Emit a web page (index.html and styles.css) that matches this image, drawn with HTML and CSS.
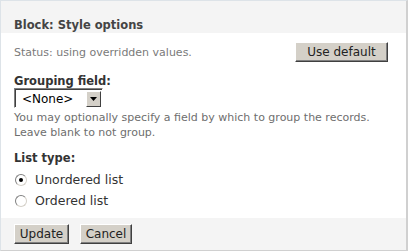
FILE: index.html
```html
<!DOCTYPE html>
<html>
<head>
<meta charset="utf-8">
<link rel="stylesheet" href="styles.css">
</head>
<body>
<div class="panel">
  <div class="header"><h2 class="title">Block: Style options</h2></div>
  <div class="content">
    <div class="status-row">
      <span class="status">Status: using overridden values.</span>
      <button class="btn btn-default">Use default</button>
    </div>
    <div class="field field-group">
      <label class="label">Grouping field:</label>
      <div class="select">
        <span class="select-value">&lt;None&gt;</span>
        <span class="select-arrow"><svg width="7" height="4" viewBox="0 0 7 4"><path d="M0 0H7L3.5 4Z" fill="#000"/></svg></span>
      </div>
      <div class="help">You may optionally specify a field by which to group the records.<br>Leave blank to not group.</div>
    </div>
    <div class="field field-list">
      <label class="label">List type:</label>
      <div class="radios">
        <label class="radio"><span class="radio-box checked"></span>Unordered list</label>
        <label class="radio"><span class="radio-box"></span>Ordered list</label>
      </div>
    </div>
  </div>
  <div class="footer">
    <button class="btn btn-update">Update</button>
    <button class="btn btn-cancel">Cancel</button>
  </div>
</div>
</body>
</html>
```
FILE: styles.css
```css
html, body {
  margin: 0;
  padding: 0;
  background: #fff;
}
body {
  font-family: "DejaVu Sans", Verdana, sans-serif;
  color: #333;
}
.panel {
  box-sizing: border-box;
  width: 408px;
  height: 251px;
  border-top: 1px solid #dde3e8;
  border-left: 1px solid #dde3e8;
  border-right: 2px solid #d0d0d0;
  border-bottom: 1px solid #d0d0d0;
  display: flex;
  flex-direction: column;
}
.header {
  background: #f4f4f4;
  height: 32px;
  padding-left: 13px;
  padding-bottom: 1px;
  display: flex;
  align-items: flex-end;
  box-sizing: border-box;
  flex: none;
}
.title {
  margin: 0;
  font-size: 11.5px;
  line-height: 14px;
  font-weight: bold;
  color: #444;
}
.content {
  flex: 1;
  padding: 0 18px 0 13px;
}
.status-row {
  display: flex;
  justify-content: space-between;
  align-items: center;
  margin-top: 9px;
}
.status {
  font-size: 11px;
  color: #7a7a7a;
}
.btn {
  font-family: "DejaVu Sans", Verdana, sans-serif;
  font-size: 12px;
  color: #222;
  background: #d4d0c8;
  border: 1px solid;
  border-color: #fff #404040 #404040 #fff;
  box-shadow: inset -1px -1px 0 #808080;
  height: 20px;
  line-height: 17px;
  margin: 0;
  padding: 0;
  box-sizing: border-box;
  text-align: center;
}
.btn-default {
  width: 93px;
}
.btn-update {
  width: 55px;
}
.btn-cancel {
  width: 52px;
}
.field-group {
  margin-top: 12px;
}
.field-list {
  margin-top: 11px;
}
.label {
  display: block;
  font-size: 11.5px;
  font-weight: bold;
  color: #333;
  line-height: 14px;
}
.select {
  box-sizing: border-box;
  width: 89px;
  height: 20px;
  border: 1px solid;
  border-color: #808080 #fff #fff #808080;
  box-shadow: inset 1px 1px 0 #404040;
  display: flex;
  align-items: center;
  justify-content: space-between;
  background: #fff;
  padding: 2px 1px 1px 2px;
}
.select-value {
  font-size: 12px;
  color: #000;
  padding-left: 5px;
}
.select-arrow {
  box-sizing: border-box;
  width: 15px;
  height: 16px;
  background: #d4d0c8;
  border: 1px solid;
  border-color: #fff #404040 #404040 #fff;
  display: flex;
  align-items: center;
  justify-content: center;
}
.help {
  font-size: 11px;
  color: #6e6e6e;
  line-height: 15px;
  margin-top: 2px;
}
.radios {
  margin-top: 4px;
}
.radio {
  display: flex;
  align-items: center;
  font-size: 12.5px;
  color: #333;
  height: 21px;
}
.radio-box {
  box-sizing: border-box;
  width: 12px;
  height: 12px;
  border-radius: 50%;
  border: 1px solid;
  border-color: #808080 #d4d0c8 #d4d0c8 #808080;
  background: #fff;
  margin: 0 8px 0 1px;
  position: relative;
}
.radio-box.checked::after {
  content: "";
  position: absolute;
  left: 3px;
  top: 3px;
  width: 4px;
  height: 4px;
  border-radius: 50%;
  background: #000;
}
.footer {
  background: #f4f4f4;
  height: 32px;
  padding: 6px 0 0 13px;
  box-sizing: border-box;
  display: flex;
  gap: 11px;
  flex: none;
}
```
